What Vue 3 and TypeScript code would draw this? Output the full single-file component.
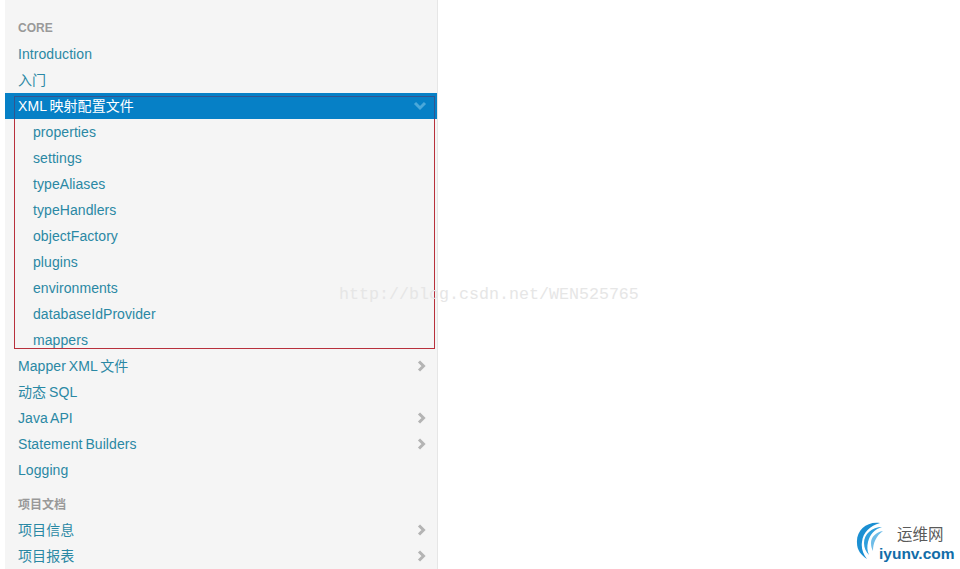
<script setup lang="ts">
interface NavItem { label: string; arrow?: boolean }
const core: NavItem[] = [
  { label: 'Introduction' },
  { label: '入门' },
]
const children: string[] = ['properties', 'settings', 'typeAliases', 'typeHandlers', 'objectFactory', 'plugins', 'environments', 'databaseIdProvider', 'mappers']
const coreRest: NavItem[] = [
  { label: 'Mapper XML 文件', arrow: true },
  { label: '动态 SQL' },
  { label: 'Java API', arrow: true },
  { label: 'Statement Builders', arrow: true },
  { label: 'Logging' },
]
const docs: NavItem[] = [
  { label: '项目信息', arrow: true },
  { label: '项目报表', arrow: true },
]
</script>

<template>
  <div class="page">
    <nav class="sidebar">
      <div class="heading first">CORE</div>
      <a v-for="i in core" :key="i.label" class="row">{{ i.label }}</a>
      <a class="row active">
        <span>XML 映射配置文件</span>
        <svg class="chev" width="14" height="10" viewBox="0 0 14 10"><path d="M2 2l5 5 5-5" fill="none" stroke="#4aa8da" stroke-width="3" /></svg>
      </a>
      <a v-for="c in children" :key="c" class="row child">{{ c }}</a>
      <a v-for="i in coreRest" :key="i.label" class="row">
        <span>{{ i.label }}</span>
        <svg v-if="i.arrow" class="chev" width="10" height="12" viewBox="0 0 10 12"><path d="M2 1.5l4.5 4.500-4.500 4.500" fill="none" stroke="#b4b4b4" stroke-width="3" /></svg>
      </a>
      <div class="heading second">项目文档</div>
      <a v-for="i in docs" :key="i.label" class="row">
        <span>{{ i.label }}</span>
        <svg v-if="i.arrow" class="chev" width="10" height="12" viewBox="0 0 10 12"><path d="M2 1.5l4.5 4.500-4.500 4.500" fill="none" stroke="#b4b4b4" stroke-width="3" /></svg>
      </a>
    </nav>
    <div class="redbox"></div>
    <div class="watermark">http://blog.csdn.net/WEN525765</div>
    <div class="logo">
      <svg class="logo-mark" width="42" height="44" viewBox="0 0 42 44">
        <path d="M24 1C11-1 0 8 1 21c0 7 4 12 10 16C7 32 5 26 6 20 7 10 14 4 24 1z" fill="#1b8fd2" />
        <path d="M26 5C16 5 8 12 8 21c0 5 2 9 5 12-2-4-2-9-1-13C14 12 19 7 26 5z" fill="#2f9fdc" />
        <path d="M27 9c-7 1-12 6-12 12 0 4 1 6 2 8 0-8 3-15 10-20z" fill="#6fbde8" />
      </svg>
      <span class="logo-cn">运维网</span>
      <span class="logo-en">iyunv.com</span>
    </div>
  </div>
</template>

<style>
html, body { margin: 0; background: #fff; }
</style>

<style scoped>
.page {
  position: relative;
  width: 960px;
  height: 569px;
  overflow: hidden;
  background: #fff;
  font-family: "Liberation Sans", "Noto Sans CJK SC", sans-serif;
}
.sidebar {
  display: flex;
  flex-direction: column;
  width: 432px;
  height: 569px;
  margin-left: 5px;
  padding-top: 1px;
  background: #f5f5f5;
  border-right: 1px solid #e6e6e6;
}
.heading {
  height: 26px;
  line-height: 26px;
  padding-left: 13px;
  font-size: 12px;
  font-weight: bold;
  color: #999;
}
.heading.first { margin-top: 14px; }
.heading.second { margin-top: 8px; line-height: 28px; }
.row {
  display: flex;
  flex: none;
  align-items: center;
  justify-content: space-between;
  height: 26px;
  line-height: 26px;
  padding: 0 10px 0 13px;
  font-size: 14px;
  letter-spacing: 0.07px;
  word-spacing: -1px;
  color: #2a88a4;
}
.child { padding-left: 28px; }
.active {
  color: #fff;
  background: #0680c6;
}
.redbox {
  position: absolute;
  left: 14px;
  top: 96px;
  width: 419px;
  height: 251px;
  border: 1px solid;
  border-image: linear-gradient(#33558f 0 23px, #b8303c 23px) 1;
  pointer-events: none;
}
.watermark {
  position: absolute;
  left: 339px;
  top: 285px;
  font-family: "Liberation Mono", monospace;
  font-size: 16.67px;
  line-height: 20px;
  color: #e6e6e6;
}
.logo {
  position: absolute;
  left: 856px;
  top: 522px;
  width: 104px;
  height: 44px;
}
.logo-mark { position: absolute; left: 0; top: 0; }
.logo-cn {
  position: absolute;
  left: 41px;
  top: 5px;
  font-size: 15.500px;
  line-height: 16px;
  color: #5a5a5a;
}
.logo-en {
  position: absolute;
  left: 23px;
  top: 23px;
  font-size: 15.500px;
  line-height: 18px;
  font-weight: bold;
  color: #126da8;
}
</style>
